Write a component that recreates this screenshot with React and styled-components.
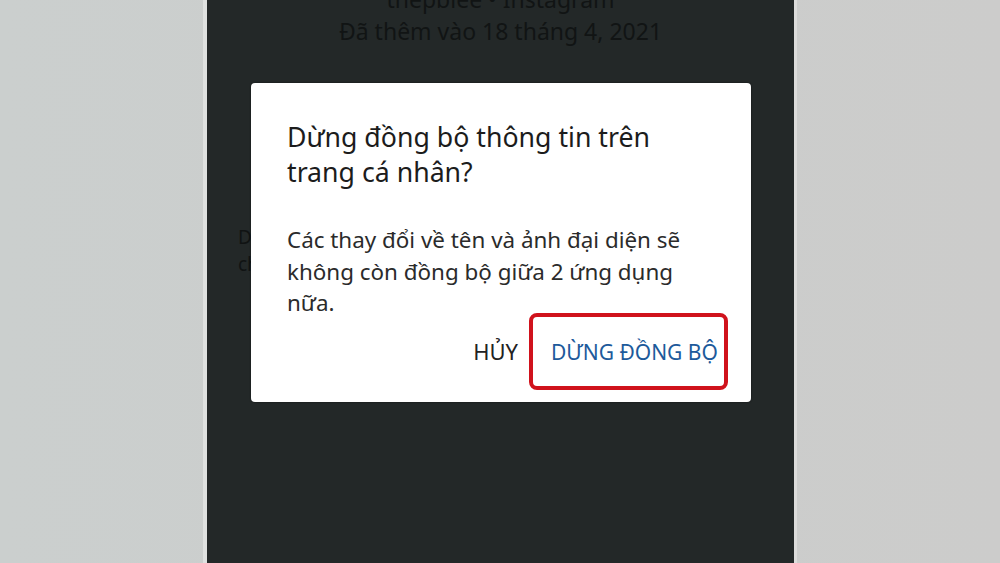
import React from "react";
import styled, { createGlobalStyle } from "styled-components";

const GlobalStyle = createGlobalStyle`
  html, body {
    margin: 0;
    padding: 0;
    height: 100%;
    background: #cbcfce;
  }
  #root {
    height: 100%;
  }
`;

const Styled = {
  Page: styled.div`
    display: flex;
    justify-content: center;
    height: 563px;
    overflow: hidden;
    background: linear-gradient(90deg, #cbcfce 0%, #cccccb 100%);
    font-family: "Noto Sans", "Open Sans", sans-serif;
  `,
  Screen: styled.div`
    position: relative;
    width: 587px;
    height: 100%;
    background: #232828;
    border-left: 4px solid #dfe1e0;
    border-right: 3px solid #dcdcdb;
    overflow: hidden;
  `,
  Header: styled.div`
    display: flex;
    flex-direction: column;
    align-items: center;
    margin-top: -17px;
    font-size: 23px;
    line-height: 32px;
    color: #111414;
  `,
  List: styled.div`
    display: flex;
    flex-direction: column;
    padding: 177px 0 0 31px;
    font-size: 19px;
    line-height: 27px;
    color: #101313;
  `,
  Overlay: styled.div`
    position: absolute;
    top: 83px;
    left: 44px;
    width: 500px;
  `,
  Dialog: styled.div`
    display: flex;
    flex-direction: column;
    height: 319px;
    box-sizing: border-box;
    padding: 36px 0 0 36px;
    background: #ffffff;
    border-radius: 4px;
    box-shadow: 0 0 2px rgba(0, 0, 0, 0.6);
  `,
  Title: styled.h2`
    margin: 0;
    font-size: 26.7px;
    font-weight: 400;
    line-height: 35px;
    color: #1c1c1c;
    white-space: nowrap;
  `,
  Body: styled.p`
    margin: 35px 0 0;
    font-size: 22.4px;
    line-height: 31.5px;
    color: #2b2b2b;
    white-space: nowrap;
  `,
  Actions: styled.div`
    display: flex;
    justify-content: flex-end;
    align-items: baseline;
    gap: 11px;
    margin-top: -6px;
    padding-right: 23px;
  `,
  Button: styled.button`
    border: none;
    background: none;
    padding: 0;
    font-family: inherit;
    font-size: ${(p) => (p.$primary ? "21px" : "22px")};
    line-height: 30px;
    white-space: nowrap;
    color: ${(p) => (p.$primary ? "#1d5a9b" : "#222222")};
  `,
  Highlight: styled.div`
    display: flex;
    align-items: baseline;
    width: 199px;
    height: 77px;
    box-sizing: border-box;
    padding: 20px 0 0 18px;
    border: 4px solid #d0121c;
    border-radius: 8px;
  `,
};

const App = () => {
  return (
    <>
      <GlobalStyle />
      <Styled.Page>
        <Styled.Screen>
          <Styled.Header>
            <span>thepblee • Instagram</span>
            <span>Đã thêm vào 18 tháng 4, 2021</span>
          </Styled.Header>
          <Styled.List>
            <span>Dùng</span>
            <span>cho</span>
          </Styled.List>
          <Styled.Overlay>
            <Styled.Dialog>
              <Styled.Title>
                Dừng đồng bộ thông tin trên
                <br />
                trang cá nhân?
              </Styled.Title>
              <Styled.Body>
                Các thay đổi về tên và ảnh đại diện sẽ
                <br />
                không còn đồng bộ giữa 2 ứng dụng
                <br />
                nữa.
              </Styled.Body>
              <Styled.Actions>
                <Styled.Button>HỦY</Styled.Button>
                <Styled.Highlight>
                  <Styled.Button $primary>DỪNG ĐỒNG BỘ</Styled.Button>
                </Styled.Highlight>
              </Styled.Actions>
            </Styled.Dialog>
          </Styled.Overlay>
        </Styled.Screen>
      </Styled.Page>
    </>
  );
};

export default App;
